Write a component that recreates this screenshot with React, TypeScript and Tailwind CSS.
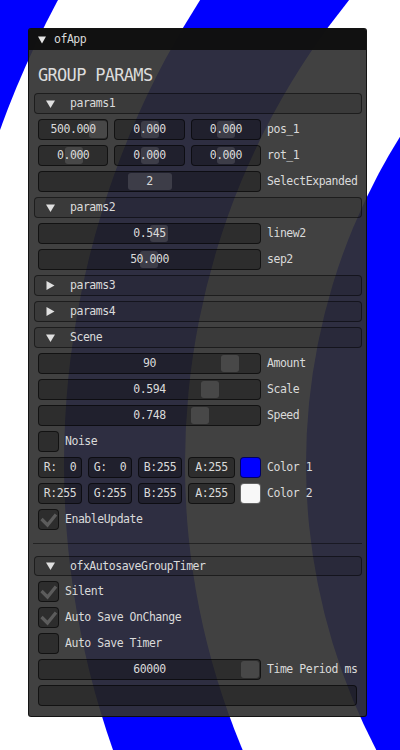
import React from "react";

type Grab = { left: number; w?: number };

function Tri({ open }: { open: boolean }) {
  return open ? (
    <svg width="9" height="8" viewBox="0 0 9 8">
      <polygon points="0,0.5 9,0.5 4.5,8" fill="#e0e0e0" />
    </svg>
  ) : (
    <svg width="9" height="9" viewBox="0 0 9 9">
      <polygon points="0.5,0 8.5,4.5 0.5,9" fill="#e0e0e0" />
    </svg>
  );
}

function Header({ label, open = true, short = false }: { label: string; open?: boolean; short?: boolean }) {
  return (
    <div
      className={`ml-[5px] mr-[4px] flex items-center rounded-[4px] border border-black/50 bg-black/10 pl-[11px] ${
        short ? "h-[20px]" : "h-[21px]"
      }`}
    >
      <div className="flex w-[9px] justify-center">
        <Tri open={open} />
      </div>
      <span className="ml-[15px] pt-px">{label}</span>
    </div>
  );
}

function Frame({ children, className = "" }: { children?: React.ReactNode; className?: string }) {
  return (
    <div
      className={`relative flex h-[21px] items-center justify-center whitespace-pre rounded-[4px] border border-black/60 bg-black/30 ${className}`}
    >
      {children}
    </div>
  );
}

function Slider({ value, grab }: { value: string; grab: Grab }) {
  return (
    <Frame className="w-full">
      <div
        className="absolute top-[1px] bottom-[1px] rounded-[3px] bg-white/[0.13]"
        style={{ left: grab.left - 1, width: grab.w ?? 18 }}
      />
      <span className="relative pt-px">{value}</span>
    </Frame>
  );
}

function Row({ label, children }: { label: string; children: React.ReactNode }) {
  return (
    <div className="ml-[9px] flex h-[21px] items-center">
      <div className="w-[223px] shrink-0">{children}</div>
      <span className="ml-[6px] whitespace-pre pt-px">{label}</span>
    </div>
  );
}

function Vec3({ label, values }: { label: string; values: [string, number][] }) {
  return (
    <Row label={label}>
      <div className="grid grid-cols-3 gap-[6px]">
        {values.map(([v, g], i) => (
          <Slider key={i} value={v} grab={{ left: g }} />
        ))}
      </div>
    </Row>
  );
}

function Check({ label, checked }: { label: string; checked?: boolean }) {
  return (
    <div className="ml-[9px] flex h-[21px] items-center">
      <div className="h-[21px] w-[21px] shrink-0 rounded-[4px] border border-black/60 bg-black/30">
        {checked ? (
          <svg width="19" height="19" viewBox="0 0 19 19">
            <polyline
              points="2.5,9 8.5,15 17,4.5"
              fill="none"
              stroke="#5c5c5c"
              strokeWidth="3.2"
              strokeLinejoin="miter"
            />
          </svg>
        ) : null}
      </div>
      <span className="ml-[6px] whitespace-pre pt-px">{label}</span>
    </div>
  );
}

function ColorRow({ label, rgba, swatch }: { label: string; rgba: string[]; swatch: string }) {
  return (
    <div className="ml-[9px] flex h-[21px] items-center">
      <div className="flex w-[223px] shrink-0 gap-[6px]">
        <Frame className="w-[44px] pt-px">{rgba[0]}</Frame>
        <Frame className="w-[44px] pt-px">{rgba[1]}</Frame>
        <Frame className="w-[44px] pt-px">{rgba[2]}</Frame>
        <Frame className="w-[47px] pt-px">{rgba[3]}</Frame>
        <div
          className={`ml-[-1px] h-[21px] w-[21px] rounded-[4px] border border-black/60 ${swatch}`}
        />
      </div>
      <span className="ml-[6px] whitespace-pre pt-px">{label}</span>
    </div>
  );
}

export default function App() {
  return (
    <div className="relative h-[750px] w-[400px] overflow-hidden bg-white font-['DejaVu_Sans_Mono',monospace] text-[11.5px] tracking-[-0.47px] text-[#dadada]">
      <svg className="absolute inset-0" width="400" height="750" viewBox="0 0 400 750">
        <rect width="400" height="750" fill="#0000ff" />
        <circle cx="923" cy="464" r="981.6" fill="#ffffff" />
        <circle cx="923" cy="464" r="859" fill="#0000ff" />
        <circle cx="923" cy="464" r="738" fill="#ffffff" />
        <circle cx="923" cy="464" r="617" fill="#0000ff" />
      </svg>

      <div className="relative pl-[28px] pt-[28px]">
        <div className="w-[339px] overflow-hidden rounded-[3px] border border-black/70 bg-[rgba(50,50,50,0.925)]">
          <div className="flex h-[21px] items-center bg-[rgba(15,15,15,0.95)] pl-[9px]">
            <svg width="8" height="8" viewBox="0 0 8 8">
              <polygon points="0,0.5 8,0.5 4,7.5" fill="#e6e6e6" />
            </svg>
            <span className="ml-[8px] pt-px">ofApp</span>
          </div>

          <div className="flex flex-col pb-[10px] pt-[15px]">
            <div className="ml-[9px] h-[20px] text-[17px] leading-[20px] tracking-[-0.7px] text-[#dcdcdc]">
              GROUP PARAMS
            </div>

            <div className="mt-[8px] flex flex-col gap-[5px]">
              <Header label="params1" />
              <Vec3 label="pos_1" values={[["500.000", 51], ["0.000", 26.4], ["0.000", 26.7]]} />
              <Vec3 label="rot_1" values={[["0.000", 26.7], ["0.000", 26.4], ["0.000", 26.7]]} />
              <Row label="SelectExpanded">
                <Slider value="2" grab={{ left: 90, w: 44 }} />
              </Row>
              <Header label="params2" />
              <Row label="linew2">
                <Slider value="0.545" grab={{ left: 111.7 }} />
              </Row>
              <Row label="sep2">
                <Slider value="50.000" grab={{ left: 101.7 }} />
              </Row>
              <Header label="params3" open={false} />
              <Header label="params4" open={false} />
              <Header label="Scene" />
              <Row label="Amount">
                <Slider value="90" grab={{ left: 183.3 }} />
              </Row>
              <Row label="Scale">
                <Slider value="0.594" grab={{ left: 163 }} />
              </Row>
              <Row label="Speed">
                <Slider value="0.748" grab={{ left: 153 }} />
              </Row>
              <Check label="Noise" />
              <ColorRow label="Color 1" rgba={["R:  0", "G:  0", "B:255", "A:255"]} swatch="bg-[#0000ff]" />
              <ColorRow label="Color 2" rgba={["R:255", "G:255", "B:255", "A:255"]} swatch="bg-[#f8f8f8]" />
              <Check label="EnableUpdate" checked />
            </div>

            <div className="ml-[4px] mr-[4px] mt-[13px] h-px bg-black/45" />

            <div className="mt-[12px]">
              <Header label="ofxAutosaveGroupTimer" short />
            </div>

            <div className="mt-[5px] flex flex-col gap-[5px]">
              <Check label="Silent" checked />
              <Check label="Auto Save OnChange" checked />
              <Check label="Auto Save Timer" />
              <Row label="Time Period ms">
                <Slider value="60000" grab={{ left: 203 }} />
              </Row>
              <div className="ml-[9px] mr-[9px]">
                <Frame />
              </div>
            </div>
          </div>
        </div>
      </div>
    </div>
  );
}
